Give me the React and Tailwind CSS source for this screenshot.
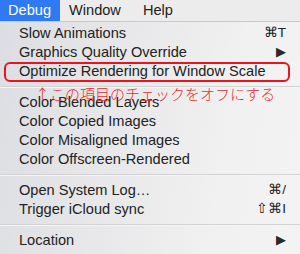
import React from "react";

const Row = ({ label, right }) => (
  <div className="h-[19px] flex items-center justify-between pl-[19px] pr-[14px]">
    <span>{label}</span>
    {right && <span className="text-[13.5px]">{right}</span>}
  </div>
);

const Arrow = () => <span className="text-[12.5px] text-[#2a2a2a]">▶</span>;

const Sep = () => (
  <div className="h-[12px] flex items-center">
    <div className="w-full h-[2px] border-t border-[#d3d3d5] border-b border-b-[#f4f4f4]" />
  </div>
);

export default function App() {
  return (
    <div
      className="w-[300px] h-[254px] overflow-hidden text-[14.6px] text-[#222] bg-[linear-gradient(100deg,#dcdde2_0%,#e8e8ea_40%,#f1f1f1_75%,#f3f3f3_100%)]"
      style={{ fontFamily: '"Liberation Sans", Arial, sans-serif' }}
    >
      {/* Menu bar */}
      <div className="h-[22px] flex items-center bg-[#ececec] border-b border-[#c9c9c9]">
        <div className="h-full flex items-center bg-[#2f7af2] text-white px-[8px] w-[60px]">Debug</div>
        <div className="ml-[9px]">Window</div>
        <div className="ml-[22px]">Help</div>
      </div>

      {/* Menu */}
      <div className="relative pt-[2px]">
        <Row label="Slow Animations" right="⌘T" />
        <Row label="Graphics Quality Override" right={<Arrow />} />
        <Row label="Optimize Rendering for Window Scale" />
        <Sep />
        <Row label="Color Blended Layers" />
        <Row label="Color Copied Images" />
        <Row label="Color Misaligned Images" />
        <Row label="Color Offscreen-Rendered" />
        <Sep />
        <Row label="Open System Log…" right="⌘/" />
        <Row label="Trigger iCloud sync" right="⇧⌘I" />
        <Sep />
        <Row label="Location" right={<Arrow />} />

        {/* annotation */}
        <div className="absolute left-[4px] top-[40px] w-[286px] h-[20px] border-2 border-[#e8161c] rounded-[6px]" />
        <div
          className="absolute left-[35px] top-[62px] text-[15px] leading-[20px] text-[#ee2a2a] whitespace-nowrap"
          style={{ fontFamily: '"Noto Sans CJK JP", sans-serif', fontWeight: 300 }}
        >
          ↑この項目のチェックをオフにする
        </div>
      </div>
    </div>
  );
}
